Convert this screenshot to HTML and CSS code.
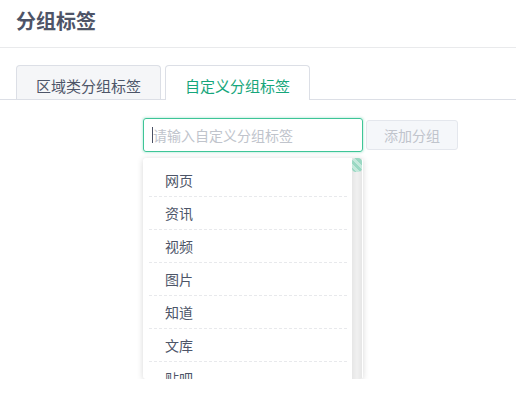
FILE: index.html
```html
<!DOCTYPE html>
<html lang="zh-CN">
<head>
  <meta charset="UTF-8">
  <meta name="viewport" content="width=device-width, initial-scale=1.0">
  <title>分组标签</title>
  <link rel="stylesheet" href="styles.css">
</head>
<body>
  <header class="page-head">
    <h1>分组标签</h1>
  </header>

  <div class="tabs">
    <div class="tab">区域类分组标签</div>
    <div class="tab active">自定义分组标签</div>
  </div>

  <section class="group-form">
    <div class="field">
      <div class="input">
        <span class="caret"></span>
        <span class="placeholder">请输入自定义分组标签</span>
      </div>
      <div class="dropdown">
        <ul class="options">
          <li>网页</li>
          <li>资讯</li>
          <li>视频</li>
          <li>图片</li>
          <li>知道</li>
          <li>文库</li>
          <li>贴吧</li>
        </ul>
        <div class="scrollbar"><div class="thumb"></div></div>
      </div>
    </div>
    <button class="btn" disabled>添加分组</button>
  </section>
</body>
</html>
```

FILE: styles.css
```css
body {
  margin: 0;
  font-family: "Noto Sans CJK SC", "Noto Sans", sans-serif;
  background: #ffffff;
  color: #4d5568;
}

.page-head {
  height: 47px;
  padding: 0 16px;
  display: flex;
  align-items: center;
  border-bottom: 1px solid #e9eaec;
}

.page-head h1 {
  margin: 0 0 7px;
  font-size: 20px;
  font-weight: bold;
  color: #4e5467;
}

.tabs {
  margin-top: 17px;
  padding-left: 16px;
  display: flex;
  gap: 4px;
  border-bottom: 1px solid #dcdfe6;
  height: 34px;
}

.tab {
  width: 145px;
  height: 34px;
  box-sizing: border-box;
  padding-top: 5px;
  border: 1px solid #dcdfe6;
  border-bottom: none;
  border-radius: 4px 4px 0 0;
  background: #f5f6f8;
  display: flex;
  align-items: center;
  justify-content: center;
  font-size: 15px;
  color: #4d5568;
}

.tab.active {
  background: #ffffff;
  height: 35px;
  padding-bottom: 1px;
  color: #16a67b;
}

.group-form {
  padding: 18px 0 0 143px;
  display: flex;
  align-items: flex-start;
  gap: 3px;
}

.field {
  display: flex;
  flex-direction: column;
  gap: 6px;
}

.input {
  width: 220px;
  height: 34px;
  box-sizing: border-box;
  border: 1px solid #3ec597;
  border-radius: 3px;
  box-shadow: 0 0 2px 1px rgba(62, 197, 151, 0.25);
  display: flex;
  align-items: center;
  padding-left: 8px;
  font-size: 14px;
}

.caret {
  width: 1px;
  height: 16px;
  background: #4a5064;
}

.placeholder {
  color: #c0c4cc;
}

.btn {
  margin-top: 2px;
  width: 92px;
  height: 30px;
  border: 1px solid #e4e7ed;
  border-radius: 3px;
  background: #f5f7fa;
  color: #c0c4cc;
  font-family: inherit;
  font-size: 14px;
}

.dropdown {
  width: 220px;
  height: 221px;
  display: flex;
  background: #ffffff;
  border-radius: 3px;
  box-shadow: 0 1px 6px rgba(0, 0, 0, 0.16);
  overflow: hidden;
}

.options {
  flex: 1;
  list-style: none;
  margin: 0;
  padding: 6px 5px 0 6px;
}

.options li {
  height: 33px;
  box-sizing: border-box;
  padding-left: 16px;
  display: flex;
  align-items: center;
  font-size: 14px;
  color: #4d5568;
  border-bottom: 1px dashed #e8e9ec;
}

.scrollbar {
  width: 10px;
  margin-right: 1px;
  background: linear-gradient(to right, #e6e6e6, #f0f0f0 50%, #e6e6e6);
}

.thumb {
  height: 14px;
  border-radius: 4px;
  background: repeating-linear-gradient(45deg, #9ad8c3 0 3px, #c4e8db 3px 6px);
}
```
